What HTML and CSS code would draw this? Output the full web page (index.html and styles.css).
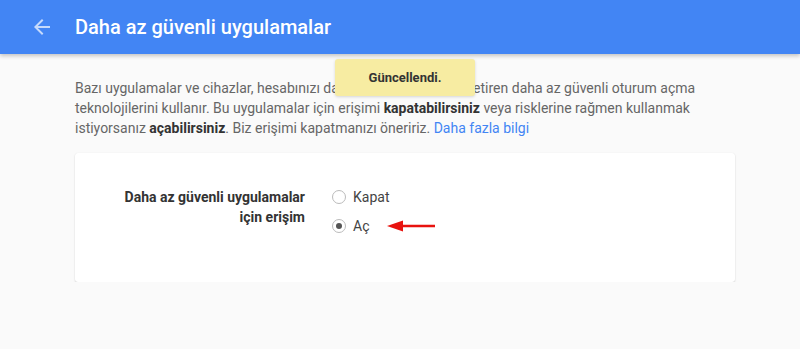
FILE: index.html
```html
<!DOCTYPE html>
<html lang="tr">
<head>
    <meta charset="UTF-8">
    <title>Daha az güvenli uygulamalar</title>
    <link rel="stylesheet" href="styles.css">
</head>
<body>
    <header class="topbar">
        <span class="back">
            <svg width="24" height="24" viewBox="0 0 24 24"><path d="M20 11H7.83l5.59-5.59L12 4l-8 8 8 8 1.41-1.41L7.83 13H20v-2z" fill="#fff"/></svg>
        </span>
        <h1>Daha az güvenli uygulamalar</h1>
    </header>

    <div class="toast">Güncellendi.</div>

    <main class="content">
        <p class="intro">Bazı uygulamalar ve cihazlar, hesabınızı daha savunmasız hale getiren daha az güvenli oturum açma teknolojilerini kullanır. Bu uygulamalar için erişimi <b>kapatabilirsiniz</b> veya risklerine rağmen kullanmak istiyorsanız <b>açabilirsiniz</b>. Biz erişimi kapatmanızı öneririz. <a href="#">Daha fazla bilgi</a></p>

        <div class="card">
            <div class="card-label">Daha az güvenli uygulamalar için erişim</div>
            <div class="options">
                <label class="option"><span class="radio"></span>Kapat</label>
                <label class="option"><span class="radio checked"></span>Aç
                    <svg class="pointer" width="50" height="12" viewBox="0 0 50 12"><path d="M14 4.8H48v2.4H14z" fill="#e8130f"/><path d="M0 6L16 0.5v11z" fill="#e8130f"/></svg>
                </label>
            </div>
        </div>
    </main>
</body>
</html>
```

FILE: styles.css
```css
body { margin: 0; background: #fafafa; font-family: Roboto, "Liberation Sans", Arial, sans-serif; }

.topbar { height: 54px; background: #4285f4; display: flex; align-items: center; box-shadow: 0 2px 4px rgba(0,0,0,0.22); position: relative; }
.topbar .back { width: 24px; height: 24px; margin-left: 30px; margin-right: 21px; opacity: 0.7; }
.topbar h1 { margin: 0; font-size: 20px; font-weight: 500; color: #fff; }

.toast { position: absolute; left: 335px; top: 59px; width: 140px; height: 37px; line-height: 37px; text-align: center; background: #f7eca2; border-radius: 3px; box-shadow: 0 1px 3px rgba(0,0,0,0.15); font-size: 13px; font-weight: 700; color: #333; }

.content { width: 660px; margin-left: 75px; padding-top: 24px; }
.intro { margin: 0 0 15px; font-size: 14px; line-height: 20px; color: #666; }
.intro b { color: #333; }
.intro a { color: #4285f4; text-decoration: none; }

.card { display: flex; background: #fff; border-radius: 3px; box-shadow: 0 1px 2px rgba(0,0,0,0.14), 0 0 1px rgba(0,0,0,0.08); padding: 34px 0 46px; }
.card-label { width: 230px; text-align: right; padding-left: 40px; box-sizing: border-box; font-size: 14px; font-weight: 700; color: #333; line-height: 20px; }
.options { margin-left: 27px; display: flex; flex-direction: column; gap: 9px; }
.option { display: flex; align-items: center; height: 20px; font-size: 14px; color: #444; }
.radio { width: 12px; height: 12px; border: 1px solid #bbb; border-radius: 50%; margin-right: 7px; display: flex; align-items: center; justify-content: center; }
.radio.checked::after { content: ""; width: 6px; height: 6px; border-radius: 50%; background: #555; }
.pointer { margin-left: 18px; }
```
